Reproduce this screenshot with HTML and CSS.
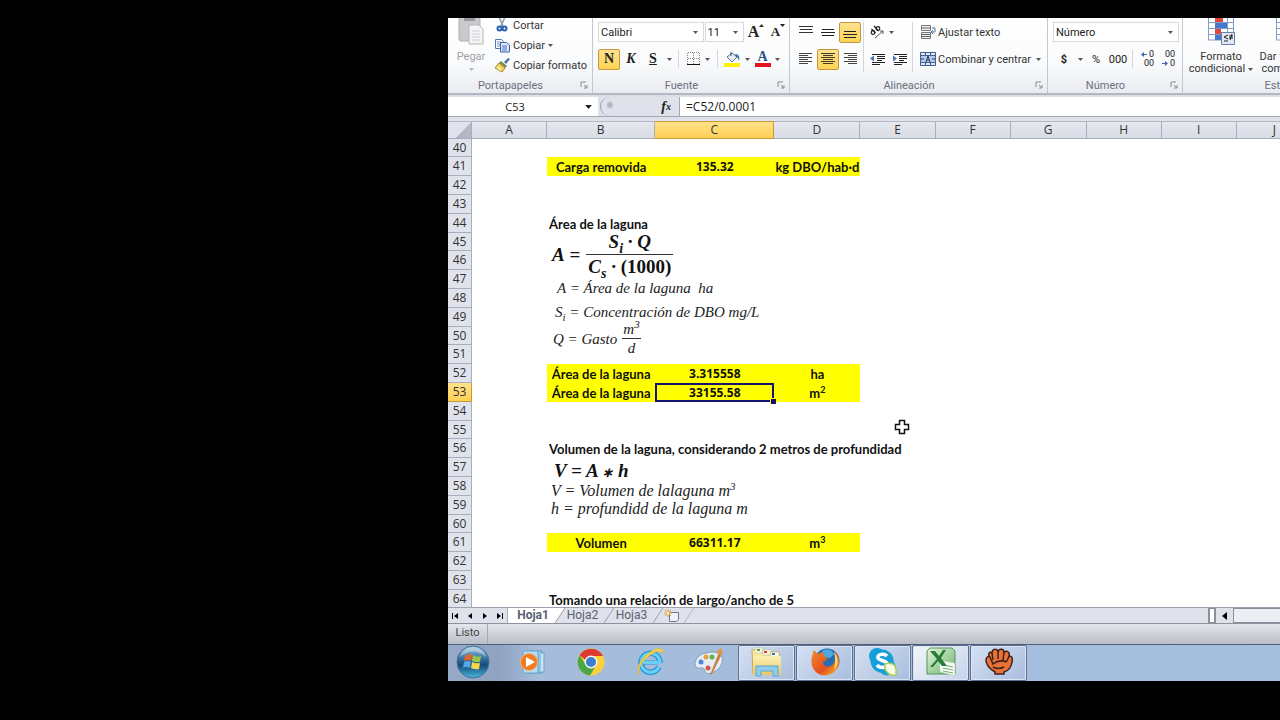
FILE: index.html
```html
<!DOCTYPE html>
<html lang="es">
<head>
<meta charset="utf-8">
<title>Hoja de cálculo</title>
<link rel="stylesheet" href="styles.css">
</head>
<body>
<svg class="defs" aria-hidden="true">
  <defs>
    <symbol id="launch" viewBox="0 0 8 8"><path d="M1 6V1h5M4 4l3 3M7 4v3H4" fill="none" stroke="#858b98"/></symbol>
    <symbol id="down" viewBox="0 0 5 3"><path d="M0 0h5L2.500 3z" fill="currentColor"/></symbol>
    <linearGradient id="gOrb" x1="0" y1="0" x2="0" y2="1"><stop offset="0" stop-color="#9cc4dc"/><stop offset=".45" stop-color="#2a6796"/><stop offset=".6" stop-color="#164b7c"/><stop offset="1" stop-color="#48b8dc"/></linearGradient>
    <linearGradient id="gFold" x1="0" y1="0" x2="0" y2="1"><stop offset="0" stop-color="#fbf0b4"/><stop offset="1" stop-color="#e8c968"/></linearGradient>
    <linearGradient id="gXl" x1="0" y1="0" x2="1" y2="1"><stop offset="0" stop-color="#e4f3dc"/><stop offset="1" stop-color="#6bb56c"/></linearGradient>
    <linearGradient id="gFox" x1="0" y1="0" x2="1" y2="1"><stop offset="0" stop-color="#f48a2a"/><stop offset=".6" stop-color="#e4501c"/><stop offset="1" stop-color="#f8c838"/></linearGradient>
  </defs>
</svg>
<main class="app">
  <section class="ribbon" aria-label="Cinta de opciones">
    <div class="group clipboard">
      <div class="body">
        <button class="paste" disabled>
          <svg width="28" height="28" viewBox="0 0 28 28"><rect x="2" y="-2" width="21" height="25" rx="2" fill="#c9cacd" stroke="#aeb0b4"/><path d="M7 0h11v3H7z" fill="#999ba0"/><path d="M12 7h10l4 4v15H12z" fill="#f4f4f6" stroke="#b4b6bb"/><path d="M15 13h8M15 16h8M15 19h8M15 22h8" stroke="#cfd0d4"/></svg>
          <span>Pegar</span><svg class="arrow"><use href="#down"/></svg>
        </button>
        <div class="stack">
          <button class="line"><svg width="16" height="16" viewBox="0 0 16 16"><path d="M5 0l4 9M11 0L7 9" stroke="#8d98ab" stroke-width="1.500"/><circle cx="5.500" cy="11.500" r="2" fill="none" stroke="#2a5db4" stroke-width="2"/><circle cx="10.500" cy="11.500" r="2" fill="none" stroke="#2a5db4" stroke-width="2"/></svg>Cortar</button>
          <button class="line"><svg width="16" height="16" viewBox="0 0 16 16"><path d="M1.500 2.500h6l2 2v7h-8z" fill="#fff" stroke="#4f74b8"/><path d="M3 5h4M3 7h4M3 9h3" stroke="#6f93cf"/><path d="M6.500 5.500h6l3 2.500v7h-9z" fill="#dce8fb" stroke="#3c62ac"/><path d="M8 9h5M8 11h5M8 13h5" stroke="#4d77c2"/></svg>Copiar<svg class="arrow"><use href="#down"/></svg></button>
          <button class="line"><svg width="16" height="16" viewBox="0 0 16 16"><path d="M10 5l4-4 2 1-4 5z" fill="#4c72a8"/><path d="M7 4l6 5-2 2-6-5z" fill="#7d8a57"/><path d="M5 6l6 5-3 4-7-4z" fill="#f2d45c" stroke="#a98a35"/><path d="M3 10l4 3" stroke="#fff2ae" stroke-width="2"/></svg>Copiar formato</button>
        </div>
      </div>
      <div class="caption"><span>Portapapeles</span><svg><use href="#launch"/></svg></div>
    </div>

    <div class="group font">
      <div class="body rows">
        <div class="row">
          <label class="combo face"><select aria-label="Fuente"><option>Calibri</option></select><svg class="arrow"><use href="#down"/></svg></label><label class="combo size"><select aria-label="Tamaño de fuente"><option>11</option></select><svg class="arrow"><use href="#down"/></svg></label>
          <button class="tool grow serif" aria-label="Aumentar tamaño">A<svg width="5" height="3" viewBox="0 0 5 3"><path d="M0 3h5L2.500 0z" fill="#333"/></svg></button>
          <button class="tool grow small serif" aria-label="Disminuir tamaño">A<svg width="5" height="3"><use href="#down"/></svg></button>
        </div>
        <div class="row">
          <button class="tool on serif">N</button><button class="tool serif it">K</button><button class="tool serif un">S</button><button class="tool tiny" aria-label="Subrayado"><svg class="arrow"><use href="#down"/></svg></button><i class="sep"></i>
          <button class="tool wide" aria-label="Bordes"><svg width="14" height="14" viewBox="0 0 14 14"><path d="M.5 1v11M6.500 1v11M12.500 1v11M1 .5h12M1 6.500h12" fill="none" stroke="#888" stroke-dasharray="1 1"/><path d="M0 12.500h13" stroke="#111"/></svg><svg class="arrow"><use href="#down"/></svg></button><i class="sep"></i>
          <button class="tool wide" aria-label="Color de relleno"><svg width="17" height="16" viewBox="0 0 17 16"><path d="M3 6l5-4 5 4-5 5z" fill="#e6edf5" stroke="#5c7598"/><path d="M7 5V1" stroke="#444"/><path d="M11 3c4 0 5 3 4 7-1-2-1-4-3-4" fill="#3c6fae"/><path d="M0 12h16v4H0z" fill="#fff200"/></svg><svg class="arrow"><use href="#down"/></svg></button>
          <button class="tool wide" aria-label="Color de fuente"><span class="inkwell">A</span><svg class="arrow"><use href="#down"/></svg></button>
        </div>
      </div>
      <div class="caption"><span>Fuente</span><svg><use href="#launch"/></svg></div>
    </div>

    <div class="group align">
      <div class="body">
        <div class="rows">
          <div class="row">
            <button class="tool" aria-label="Alinear arriba"><svg width="14" height="14" viewBox="0 0 14 14"><path d="M0 1.500h14M1 4.500h12M0 7.500h14" stroke="#333"/></svg></button><button class="tool" aria-label="Alinear en el medio"><svg width="14" height="14" viewBox="0 0 14 14"><path d="M1 4.500h12M0 7.500h14M1 10.500h12" stroke="#222"/></svg></button><button class="tool on" aria-label="Alinear abajo"><svg width="14" height="14" viewBox="0 0 14 14"><path d="M1 6.500h12M0 9.500h14M1 12.500h12" stroke="#222"/></svg></button>
          </div>
          <div class="row">
            <button class="tool" aria-label="Izquierda"><svg width="14" height="14" viewBox="0 0 14 14"><path d="M0 1.500h13M0 3.500h9M0 5.500h13M0 7.500h9M0 9.500h13M0 11.500h9" stroke="#444"/></svg></button><button class="tool on" aria-label="Centrar"><svg width="14" height="14" viewBox="0 0 14 14"><path d="M0 1.500h14M2 3.500h10M0 5.500h14M2 7.500h10M0 9.500h14M2 11.500h10" stroke="#443c28"/></svg></button><button class="tool" aria-label="Derecha"><svg width="14" height="14" viewBox="0 0 14 14"><path d="M1 1.500h13M5 3.500h9M1 5.500h13M5 7.500h9M1 9.500h13M5 11.500h9" stroke="#444"/></svg></button>
          </div>
        </div>
        <i class="sep tall"></i>
        <div class="rows">
          <div class="row">
            <button class="tool wide" aria-label="Orientación"><svg width="16" height="16" viewBox="0 0 16 16"><circle cx="4" cy="8.500" r="1.800" fill="none" stroke="#222" stroke-width="1.200"/><path d="M2.500 5l4 4M5 2l4.500 5" stroke="#222" stroke-width="1.200"/><circle cx="9" cy="4.500" r="1.800" fill="none" stroke="#222" stroke-width="1.200"/><path d="M6 14l8-7M14 10V7h-3" fill="none" stroke="#555"/></svg><svg class="arrow"><use href="#down"/></svg></button>
          </div>
          <div class="row">
            <button class="tool" aria-label="Disminuir sangría"><svg width="15" height="13" viewBox="0 0 15 13"><path d="M2 1.500h13M7 3.500h8M7 5.500h8M7 7.500h5M2 9.500h13M2 11.500h8" stroke="#222"/><path d="M0 5.500l4-3v6z" fill="#4d72ad"/></svg></button><button class="tool" aria-label="Aumentar sangría"><svg width="15" height="13" viewBox="0 0 15 13"><path d="M2 1.500h13M7 3.500h8M7 5.500h8M7 7.500h5M2 9.500h13M2 11.500h8" stroke="#222"/><path d="M5 5.500l-4-3v6z" fill="#4d72ad"/></svg></button>
          </div>
        </div>
        <i class="sep tall"></i>
        <div class="rows">
          <button class="row line"><svg width="16" height="16" viewBox="0 0 16 16"><path d="M1.500 1.500h9v5h-9zM1.500 8.500h9v6h-9z" fill="#f0f0f2" stroke="#777"/><path d="M2 4h9M2 10.500h8M2 12.500h8" stroke="#666"/><path d="M12 4h3v4h-4M13 6l-2 2 2 2" fill="none" stroke="#4a71a8"/></svg>Ajustar texto</button>
          <button class="row line"><svg width="16" height="16" viewBox="0 0 16 16"><path d="M.5 1.500h15v13H.5z" fill="#dce6f4" stroke="#3f5f92"/><path d="M0 4.500h16M0 11.500h16M5.500 1v3M10.500 1v3M5.500 12v3M10.500 12v3" stroke="#3f5f92"/><path d="M1 5h14v6H1z" fill="#b7cdec"/><path d="M6 11l2-6 2 6M6.500 9h3M1 8h3M12 8h3" fill="none" stroke="#223b66"/></svg>Combinar y centrar<svg class="arrow"><use href="#down"/></svg></button>
        </div>
      </div>
      <div class="caption"><span>Alineación</span><svg><use href="#launch"/></svg></div>
    </div>

    <div class="group number">
      <div class="body rows">
        <div class="row"><label class="combo format"><select aria-label="Formato de número"><option>Número</option></select><svg class="arrow"><use href="#down"/></svg></label></div>
        <div class="row"><button class="tool strong">$</button><button class="tool tiny" aria-label="Moneda"><svg class="arrow"><use href="#down"/></svg></button><button class="tool">%</button><button class="tool zeros">000</button><i class="sep"></i><button class="tool decimals" aria-label="Aumentar decimales"><span><svg width="6" height="5" viewBox="0 0 6 5"><path d="M0 2.500L3 0v2h3v1H3v2z" fill="#3c64a8"/></svg>0</span><span>00</span></button><button class="tool decimals" aria-label="Disminuir decimales"><span>00</span><span><svg width="6" height="5" viewBox="0 0 6 5"><path d="M6 2.500L3 0v2H0v1h3v2z" fill="#3c64a8"/></svg>0</span></button></div>
      </div>
      <div class="caption"><span>Número</span><svg><use href="#launch"/></svg></div>
    </div>

    <div class="group styles">
      <div class="body">
        <button class="big"><svg width="30" height="28" viewBox="0 0 30 28"><path d="M2.500-2h25v24h-25z" fill="#fff" stroke="#7f9cc8"/><path d="M2 4.500h26M2 10.500h26M2 16.500h26M9.500 0v22M21.500 0v22" stroke="#7f9cc8"/><path d="M9 0h8v4H9zM9 11h6v5H9z" fill="#e2453b"/><path d="M9 5h12v5H9zM9 17h8v5H9z" fill="#4479c9"/><path d="M15.500 14.500h13v12h-13z" fill="#dfe8f4" stroke="#6b7f9e"/><path d="M22 17l-4 2 4 2M18 23h4M23 18h4M23 20h4M26 16l-2 6" stroke="#222" fill="none"/></svg><span>Formato</span><span>condicional <svg class="arrow"><use href="#down"/></svg></span></button>
        <button class="big"><svg width="30" height="28" viewBox="0 0 30 28"><path d="M2.500-2h25v24h-25z" fill="#fff" stroke="#7f9cc8"/><path d="M2 4.500h26M2 10.500h26M2 16.500h26M9.500 0v22" stroke="#7f9cc8"/><path d="M10 5h17v16H10z" fill="#7da6df"/></svg><span>Dar formato</span><span>como tabla</span></button>
      </div>
      <div class="caption"><span>Estilos</span></div>
    </div>
  </section>

  <div class="formula">
    <label class="name"><input value="C53" aria-label="Cuadro de nombres"><svg class="arrow"><use href="#down"/></svg></label>
    <div class="fx"><span class="knob"></span><button aria-label="Insertar función">f<sub>x</sub></button></div>
    <input class="entry" value="=C52/0.0001" aria-label="Barra de fórmulas">
  </div>

  <section class="sheet">
    <table>
      <colgroup><col class="cn"><col class="c75"><col class="cb"><col class="cc"><col class="cd"><col class="c75"><col class="c75"><col class="c76"><col class="c75"><col class="c75"><col class="c76"></colgroup>
      <thead><tr><th class="corner"></th><th>A</th><th>B</th><th class="sel">C</th><th>D</th><th>E</th><th>F</th><th>G</th><th>H</th><th>I</th><th>J</th></tr></thead>
      <tbody>
        <tr><th>40</th></tr>
        <tr><th>41</th><td></td><td class="y">Carga removida</td><td class="y num">135.32</td><td class="y">kg DBO/hab·d</td></tr>
        <tr><th>42</th></tr>
        <tr><th>43</th></tr>
        <tr><th>44</th><td></td><td class="t" colspan="4">Área de la laguna</td></tr>
        <tr><th>45</th></tr>
        <tr><th>46</th></tr>
        <tr><th>47</th></tr>
        <tr><th>48</th></tr>
        <tr><th>49</th></tr>
        <tr><th>50</th></tr>
        <tr><th>51</th></tr>
        <tr><th>52</th><td></td><td class="y">Área de la laguna</td><td class="y num">3.315558</td><td class="y">ha</td></tr>
        <tr><th class="sel">53</th><td></td><td class="y">Área de la laguna</td><td class="y num active">33155.58</td><td class="y">m<sup>2</sup></td></tr>
        <tr><th>54</th></tr>
        <tr><th>55</th></tr>
        <tr><th>56</th><td></td><td class="t" colspan="5">Volumen de la laguna, considerando 2 metros de profundidad</td></tr>
        <tr><th>57</th></tr>
        <tr><th>58</th></tr>
        <tr><th>59</th></tr>
        <tr><th>60</th></tr>
        <tr><th>61</th><td></td><td class="y">Volumen</td><td class="y num">66311.17</td><td class="y">m<sup>3</sup></td></tr>
        <tr><th>62</th></tr>
        <tr><th>63</th></tr>
        <tr><th>64</th><td></td><td class="t" colspan="5">Tomando una relación de largo/ancho de 5</td></tr>
      </tbody>
    </table>
    <div class="eq lead e1"><span>A&nbsp;<b>=</b></span><span class="frac"><span>S<sub>i</sub> · Q</span><span>C<sub>s</sub> · <b>(1000)</b></span></span></div>
    <div class="eq e2">A = Área de la laguna&nbsp; ha</div>
    <div class="eq e3">S<sub>i</sub> = Concentración de DBO mg/L</div>
    <div class="eq e4"><span>Q = Gasto</span><span class="frac"><span>m<sup>3</sup></span><span>d</span></span></div>
    <div class="eq lead e5">V = A <small>∗</small> h</div>
    <div class="eq large e6">V = Volumen de lalaguna m<sup>3</sup></div>
    <div class="eq large e7">h = profundidd de la laguna m</div>
    <svg class="cursor" width="16" height="16" viewBox="0 0 16 16"><path d="M5.500 1.500h5v4h4v5h-4v4h-5v-4h-4v-5h4z" fill="#fff" stroke="#111" stroke-width="1.500"/></svg>
  </section>

  <nav class="tabs">
    <div class="moves">
      <button aria-label="Primera hoja"><svg width="8" height="8" viewBox="0 0 8 8"><path d="M1 1h1v6H1zM7 1v6L3 4z"/></svg></button><button aria-label="Anterior"><svg width="8" height="8" viewBox="0 0 8 8"><path d="M6 1v6L2 4z"/></svg></button><button aria-label="Siguiente"><svg width="8" height="8" viewBox="0 0 8 8"><path d="M2 1v6l4-3z"/></svg></button><button aria-label="Última hoja"><svg width="8" height="8" viewBox="0 0 8 8"><path d="M6 1h1v6H6zM1 1v6l4-3z"/></svg></button>
    </div>
    <button class="tab current">Hoja1</button><svg class="slash" viewBox="0 0 14 15"><path d="M0 0h14L4 15H0z" fill="#fff"/><path d="M14 0L4 15" stroke="#9a9eaa"/></svg>
    <button class="tab">Hoja2</button><svg class="slash" viewBox="0 0 14 15"><path d="M14 0L4 15" stroke="#9a9eaa"/></svg>
    <button class="tab">Hoja3</button><svg class="slash" viewBox="0 0 14 15"><path d="M14 0L4 15" stroke="#9a9eaa"/></svg>
    <button class="tab new" aria-label="Insertar hoja"><svg width="16" height="14" viewBox="0 0 16 14"><path d="M5.500 3.500h9v7l-2 2h-7z" fill="#eef2fa" stroke="#6b7897"/><path d="M4 0v8M0 4h8M1 1l6 6M7 1L1 7" stroke="#e2a02c"/><circle cx="4" cy="4" r="1.500" fill="#fff2b0"/></svg></button><svg class="slash" viewBox="0 0 14 15"><path d="M14 0L4 15" stroke="#b4b8c2"/></svg>
    <div class="scroll"><span class="split"></span><button aria-label="Desplazar a la izquierda"><svg width="8" height="8" viewBox="0 0 8 8"><path d="M6 0v8L1 4z"/></svg></button><span class="thumb"></span></div>
  </nav>
  <footer class="status"><span>Listo</span></footer>

  <nav class="taskbar" aria-label="Barra de tareas">
    <button class="start" aria-label="Inicio"><svg width="34" height="34" viewBox="0 0 34 34"><circle cx="17" cy="17" r="16" fill="url(#gOrb)" stroke="#426f92"/><path d="M9 11q4-3 7-1l-1 6q-4-2-7 0z" fill="#e8632c"/><path d="M17 10q4 3 8 1l-1 6q-4 1-8-1z" fill="#9ac846"/><path d="M8 17q4-2 7 0l-1 6q-4-2-7 0z" fill="#55a8e4"/><path d="M16 17q4 2 8 1l-1 6q-4 1-8-1z" fill="#f8d648"/><path d="M4 12q13-11 26 0-3-10-13-10T4 12" fill="#fff" opacity=".35"/></svg></button>
    <button class="pin" aria-label="Reproductor"><svg width="28" height="28" viewBox="0 0 28 28"><path d="M9 3h15v22H9z" fill="#8fc6e6" stroke="#5e9dc6"/><path d="M5 3h15v22H5z" fill="#b5ddf1" stroke="#69a5cb"/><path d="M23 5h3v19h-3" fill="#c7e5f3" stroke="#69a5cb"/><circle cx="11" cy="14" r="8.500" fill="#ef7c22" stroke="#f7b273"/><path d="M8 9l9 5-9 5z" fill="#fff"/></svg></button>
    <button class="pin" aria-label="Chrome"><svg width="28" height="28" viewBox="0 0 28 28"><circle cx="14" cy="14" r="13.500" fill="#fbd03b"/><path d="M2.500 7.300A13.500 13.500 0 0 1 26 8H14a6 6 0 0 0-5.500 4z" fill="#dc3b2d"/><path d="M2.500 7.200A13.500 13.500 0 0 0 13 27.500l5-8.500a6 6 0 0 1-9-2z" fill="#4aa849"/><circle cx="14" cy="14" r="6.500" fill="#f5f5f2"/><circle cx="14" cy="14" r="5" fill="#3c7fd0"/></svg></button>
    <button class="pin" aria-label="Internet Explorer"><svg width="30" height="30" viewBox="0 0 30 30"><path d="M8 15.500h15" stroke="#2796d6" stroke-width="4"/><path d="M24 20a9.500 9.500 0 1 1 1-4" fill="none" stroke="#2796d6" stroke-width="5.500"/><path d="M24 20a9.500 9.500 0 1 1 1-4M8 15.500h17" fill="none" stroke="#6bd0f6" stroke-width="3"/><path d="M4 28C-1 23 7 9 17 4c7-4 12-3 11 3-2-4-6-3-11 0C8 12 2 22 4 28z" fill="#f4d34b" stroke="#d9a928" stroke-width=".5"/></svg></button>
    <button class="pin" aria-label="Paint"><svg width="30" height="28" viewBox="0 0 30 28"><path d="M12 5C3 6-1 15 2 19c3 3 6-1 8 2s1 6 7 4c8-2 13-10 11-16-2-5-9-6-16-4z" fill="#e3edf3" stroke="#7f9db4"/><circle cx="7" cy="14" r="2.500" fill="#4a87d8"/><circle cx="12" cy="9" r="2.500" fill="#e3a23c"/><circle cx="18" cy="9" r="2.500" fill="#63b34d"/><circle cx="14" cy="20" r="2.500" fill="#d85648"/><path d="M25 4l3 2-10 20-2 1z" fill="#c58243"/><path d="M23 3l4-3 2 4-2 4-3-2z" fill="#dd9850"/></svg></button>
    <button class="win" aria-label="Explorador"><svg width="32" height="30" viewBox="0 0 32 30"><path d="M1 3h9l2 2h16v22H2z" fill="url(#gFold)" stroke="#c9a94e"/><path d="M4 1h8v5H4zM11 3h9v5h-9zM19 5h9v5h-9z" fill="#fbf7e2" stroke="#c2b37b" stroke-width=".5"/><path d="M6 2h3v2H6z" fill="#4aa457"/><path d="M13 4h3v2h-3z" fill="#cc4238"/><path d="M21 6h3v2h-3z" fill="#3c74bd"/><path d="M2 9h28v19H2z" fill="url(#gFold)"/><path d="M5 29V19h22v10h-5v-5H10v5z" fill="#8fcdec" stroke="#5fa5d0"/></svg></button>
    <button class="win" aria-label="Firefox"><svg width="30" height="30" viewBox="0 0 30 30"><circle cx="17" cy="14" r="12.500" fill="#276cb5"/><path d="M12 4q8-4 12 3l-4 4-7-1z" fill="#4ea9df"/><path d="M4 3l4 4 5-2 1 4 4 3-5 3c1 6 7 6 10 2 3-3 3-8 1-13 6 5 7 13 2 19-6 8-19 7-23-2C0 15 2 9 4 3z" fill="url(#gFox)"/><path d="M24 5c5 5 5 13 0 18 1-6 2-12 0-18z" fill="#f9dc61"/></svg></button>
    <button class="win" aria-label="Skype"><svg width="30" height="30" viewBox="0 0 30 30"><circle cx="9" cy="9" r="8" fill="#159fd9"/><circle cx="19" cy="20" r="8.500" fill="#159fd9"/><circle cx="14" cy="14" r="11.500" fill="#159fd9"/><path d="M19 9c-3-3-10-2-9 2 1 3 9 2 9 6 0 5-8 4-10 1" fill="none" stroke="#fff" stroke-width="3.500"/><path d="M17 17q7-2 10 2 2 4 1 9-6 1-9-3-3-3-2-8z" fill="#f5fae5" stroke="#a6ce54" stroke-width="1.500"/></svg></button>
    <button class="win lit" aria-label="Excel"><svg width="30" height="30" viewBox="0 0 30 30"><path d="M4 1h22l3 3v23H1V4z" fill="url(#gXl)" stroke="#55935a"/><path d="M13 13l16 3v13l-15-4z" fill="#f6faf5" stroke="#8abd8c" stroke-width=".5"/><path d="M17 18l10 2M17 21l10 2M17 24l10 2" stroke="#77ac7a"/><path d="M4 4h5l4 5 4-6h3l-5 8 6 8h-5l-4-5-5 6H4l7-8z" fill="#267b35"/></svg></button>
    <button class="win" aria-label="Grabador"><svg width="28" height="28" viewBox="0 0 28 28"><path d="M5 9C2 6 5 3 7 5c0-4 4-5 6-2 2-3 6-2 6 1 3-2 6 0 5 4 3 0 4 2 3 6-1 6-4 9-8 10v2h-9v-2C5 21 1 17 1 12c0-3 2-4 4-3z" fill="#ea7138" stroke="#3b211a" stroke-width="1.500"/><path d="M7 5l1 7M13 3l0 8M19 4l-1 8M24 8l-2 5M5 9l3 7q6-5 14-2M8 19q5 3 11 0" fill="none" stroke="#3b211a" stroke-width="1.500"/></svg></button>
  </nav>
</main>
</body>
</html>
```
FILE: styles.css
```css
* { box-sizing: border-box; }
body { margin: 0; background: #000; font-family: Roboto, "Noto Sans", sans-serif; font-size: 11px; color: #333; }
button, select, input { font: inherit; color: inherit; border: 0; background: none; padding: 0; margin: 0; appearance: none; }
button { display: flex; align-items: center; justify-content: center; white-space: nowrap; }
.defs { position: absolute; width: 0; height: 0; }
svg { flex: none; display: block; }
.arrow { width: 5px; height: 3px; color: #555; }

.app { display: flex; flex-direction: column; height: calc(100vh - 57px); margin: 18px 0 39px 35%; background: #fff; overflow: hidden; }

/* Ribbon */
.ribbon { display: flex; flex: none; height: 79px; overflow: hidden; background: linear-gradient(#fff 0, #fafbfc 55%, #e9ebf0 75px, #858994 76px, #dcdfe6 77px); }
.group { display: flex; flex-direction: column; flex: none; height: 75px; border-right: 1px solid #c4c7ce; }
.body { display: flex; flex: 1; }
.caption { display: flex; align-items: center; height: 16px; color: #6b707c; padding: 0 4px 0 0; }
.caption span { flex: 1; text-align: center; padding-right: 7px; }
.caption svg { width: 8px; height: 8px; }
.clipboard { width: 145px; }
.font { width: 197px; }
.align { width: 258px; }
.number { width: 135px; }
.styles { width: 200px; border: 0; }
.styles .caption span { padding: 0; }
.paste { flex-direction: column; justify-content: flex-start; width: 46px; color: #a0a3aa; }
.paste .arrow { color: #b4b6bb; margin-top: 3px; }
.paste span { line-height: 16px; margin-top: 3px; }
.stack { display: flex; flex-direction: column; gap: 6px; }
.stack .line { height: 14px; }
.line { justify-content: flex-start; gap: 3px; }
.rows { display: flex; flex-direction: column; gap: 3px; padding-top: 2px; }
.row { display: flex; align-items: center; height: 24px; }
.font .body, .number .body, .align .body { padding-left: 5px; }
.font .rows, .number .rows { padding-left: 5px; }
.align .line { gap: 2px; padding-left: 5px; }
.align .line .arrow { margin-left: 3px; }
.tool { width: 22px; height: 21px; flex: none; color: #222; }
.on { background: linear-gradient(#fde391, #fdd454); border: 1px solid #c9973a; border-radius: 2px; }
.wide { width: 30px; gap: 4px; }
.tiny { width: 10px; }
.serif { font-family: "Liberation Serif", serif; font-weight: 700; font-size: 14px; }
.it { font-style: italic; }
.un { text-decoration: underline; }
.grow { font-size: 16px; }
.grow svg { align-self: flex-start; margin-top: 2px; }
.grow.small { font-size: 13px; }
.inkwell { font: 700 14px/12px "Liberation Serif", serif; width: 16px; height: 16px; border-bottom: 4px solid #e3141b; color: #2d4f8a; }
.sep { width: 1px; height: 18px; background: #d4d6dc; margin: 0 4px; }
.sep.tall { height: 50px; margin: 4px 2px; }
.combo { position: relative; height: 20px; border: 1px solid #d6d9e0; background: #fff; }
.combo select { width: 100%; height: 18px; padding: 0 2px; color: #222; }
.combo .arrow, .name .arrow { position: absolute; right: 5px; top: 8px; }
.face { width: 107px; }
.size { width: 40px; margin: 0 1px; }
.format { width: 126px; }
.strong { font-weight: 700; }
.decimals { flex-direction: column; align-items: flex-end; width: 21px; font-size: 9px; line-height: 9px; padding-right: 3px; }
.decimals span { display: flex; align-items: center; gap: 2px; height: 9px; }
.number .sep { margin: 0 3px; }
.styles .body { padding-left: 4px; }
.big { flex-direction: column; justify-content: flex-start; width: 68px; line-height: 12px; }
.big > svg { margin-bottom: 5px; }
.big span { display: flex; align-items: center; gap: 3px; }

/* Formula bar */
.formula { display: flex; flex: none; height: 24px; background: #dfe2ea; padding-bottom: 4px; color: #222; font-family: "Open Sans", sans-serif; }
.name { position: relative; width: 150px; background: #fff; border-bottom: 1px solid #a3a7b2; }
.name input { width: 134px; height: 19px; text-align: center; }
.name .arrow { right: 6px; width: 7px; height: 4px; color: #222; }
.fx { display: flex; align-items: center; justify-content: space-between; width: 82px; padding: 0 8px 0 2px; border-bottom: 1px solid #a3a7b2; border-right: 1px solid #a3a7b2; }
.knob { width: 60px; height: 19px; border-left: 1px solid #989ca8; border-radius: 10px 0 0 10px; background: radial-gradient(circle at 9px 8px, #b4b7c0 0 2px, transparent 4px); }
.fx button { font: italic 700 14px "Liberation Serif", serif; }
.fx sub { font-size: 10px; }
.entry { flex: 1; min-width: 0; background: #fff; padding-left: 6px; border-bottom: 1px solid #a3a7b2; font-size: 12px; }

/* Worksheet */
.sheet { position: relative; flex: 1; min-height: 0; overflow: hidden; font-family: Lato, sans-serif; font-size: 13px; color: #111; }
table { table-layout: fixed; width: 865px; border-collapse: separate; border-spacing: 0; }
.cn { width: 24px; } .c75 { width: 75px; } .c76 { width: 76px; } .cb { width: 108px; } .cc { width: 119px; } .cd { width: 86px; }
th { font-weight: 400; font-family: "Open Sans", sans-serif; font-size: 12px; padding: 0; height: 19px; line-height: 16px; color: #333; background: #e0e3eb; border: solid #a9aebb; border-width: 0 1px 1px 0; }
thead th { height: 18px; background: linear-gradient(#e6e8ee, #d8dce5); border-top: 1px solid #b4b8c4; }
tbody tr:nth-child(5n+1) th { height: 18px; }
th.sel { background: linear-gradient(#ffe28a, #ffcf54); border-color: #c79b38; }
thead th.corner { background: linear-gradient(135deg, #e0e3eb 60%, #b4b8c4 60%); }
td { padding: 0; line-height: 16px; font-weight: 700; text-align: center; white-space: nowrap; }
td sup { font-size: 9px; line-height: 0; }
.y { background: #ff0; }
.num { font-family: "Open Sans", sans-serif; font-size: 12px; }
.t { text-align: left; padding-left: 2px; }
.active { position: relative; box-shadow: inset 0 0 0 2px #14146e; }
.active::after { content: ""; position: absolute; right: -2px; bottom: -2px; width: 5px; height: 5px; background: #14146e; border: 1px solid #ff0; border-width: 1px 0 0 1px; }

/* Floating equation objects */
.eq { position: absolute; font: italic 15px/18px "Liberation Serif", serif; white-space: pre; color: #222; }
.eq sub, .eq sup { font-size: 11px; line-height: 0; }
.eq b { font-style: normal; }
.eq .frac { display: flex; flex-direction: column; align-items: center; }
.frac > span { padding: 0 2px; }
.frac > span:first-child { border-bottom: 1px solid #333; align-self: stretch; text-align: center; }
.eq.lead { font-weight: 700; font-size: 19px; line-height: 24px; color: #111; }
.lead sub { font-size: 14px; }
.lead small { font-size: 13px; }
.eq.large { font-size: 16px; }
.e1 { display: flex; align-items: center; gap: 6px; left: 104px; top: 109px; }
.e2 { left: 109px; top: 158px; }
.e3 { left: 107px; top: 182px; }
.e4 { display: flex; align-items: center; gap: 5px; left: 105px; top: 199px; }
.e4 .frac > span { padding: 0 1px; }
.e5 { left: 106px; top: 338px; }
.e6 { left: 103px; top: 361px; }
.e7 { left: 103px; top: 379px; }
.cursor { position: absolute; left: 446px; top: 298px; }

/* Sheet tabs */
.tabs { display: flex; flex: none; height: 16px; background: #dfe2ea; border-top: 1px solid #9da1ad; font-size: 12px; color: #5a6070; }
.moves { display: flex; width: 60px; border-right: 1px solid #a9aebb; }
.moves button { flex: 1; }
.tab { line-height: 15px; width: 35px; }
.tab.current { background: #fff; font-weight: 700; width: 43px; padding-left: 7px; }
.tab.new { width: 17px; }
.slash { width: 14px; height: 15px; }
.scroll { display: flex; margin-left: auto; width: 72px; }
.split { width: 8px; border: 2px solid #8b8f9a; border-width: 1px 2px; background: #fff; }
.scroll button { width: 17px; }
.thumb { flex: 1; border: 1px solid #8b8f9a; border-right: 0; background: #eceef3; }

.status { display: flex; flex: none; height: 21px; background: linear-gradient(#e4e6ec, #b9bdc6); border-top: 1px solid #8e929e; color: #444; }
.status span { width: 40px; text-align: center; line-height: 18px; border-right: 1px solid #a4a8b2; }

/* Taskbar */
.taskbar { display: flex; flex: none; height: 37px; background: linear-gradient(90deg, #97abc8 0, #8fa3c0 50px, #a5bcdb 90px, #a5bfde); border-top: 1px solid #4d5f7a; }
.taskbar button { padding-bottom: 2px; }
.start { width: 50px; margin-right: 4px; }
.pin { width: 59px; }
.win { width: 57px; margin-right: 1px; border: 1px solid #5c7090; border-radius: 2px; background: linear-gradient(135deg, #d5e0f2, #a9bddd); box-shadow: inset 0 0 0 1px #dbe5f4; }
.lit { background: linear-gradient(135deg, #f2f5fb, #c5d3ea); }
```
